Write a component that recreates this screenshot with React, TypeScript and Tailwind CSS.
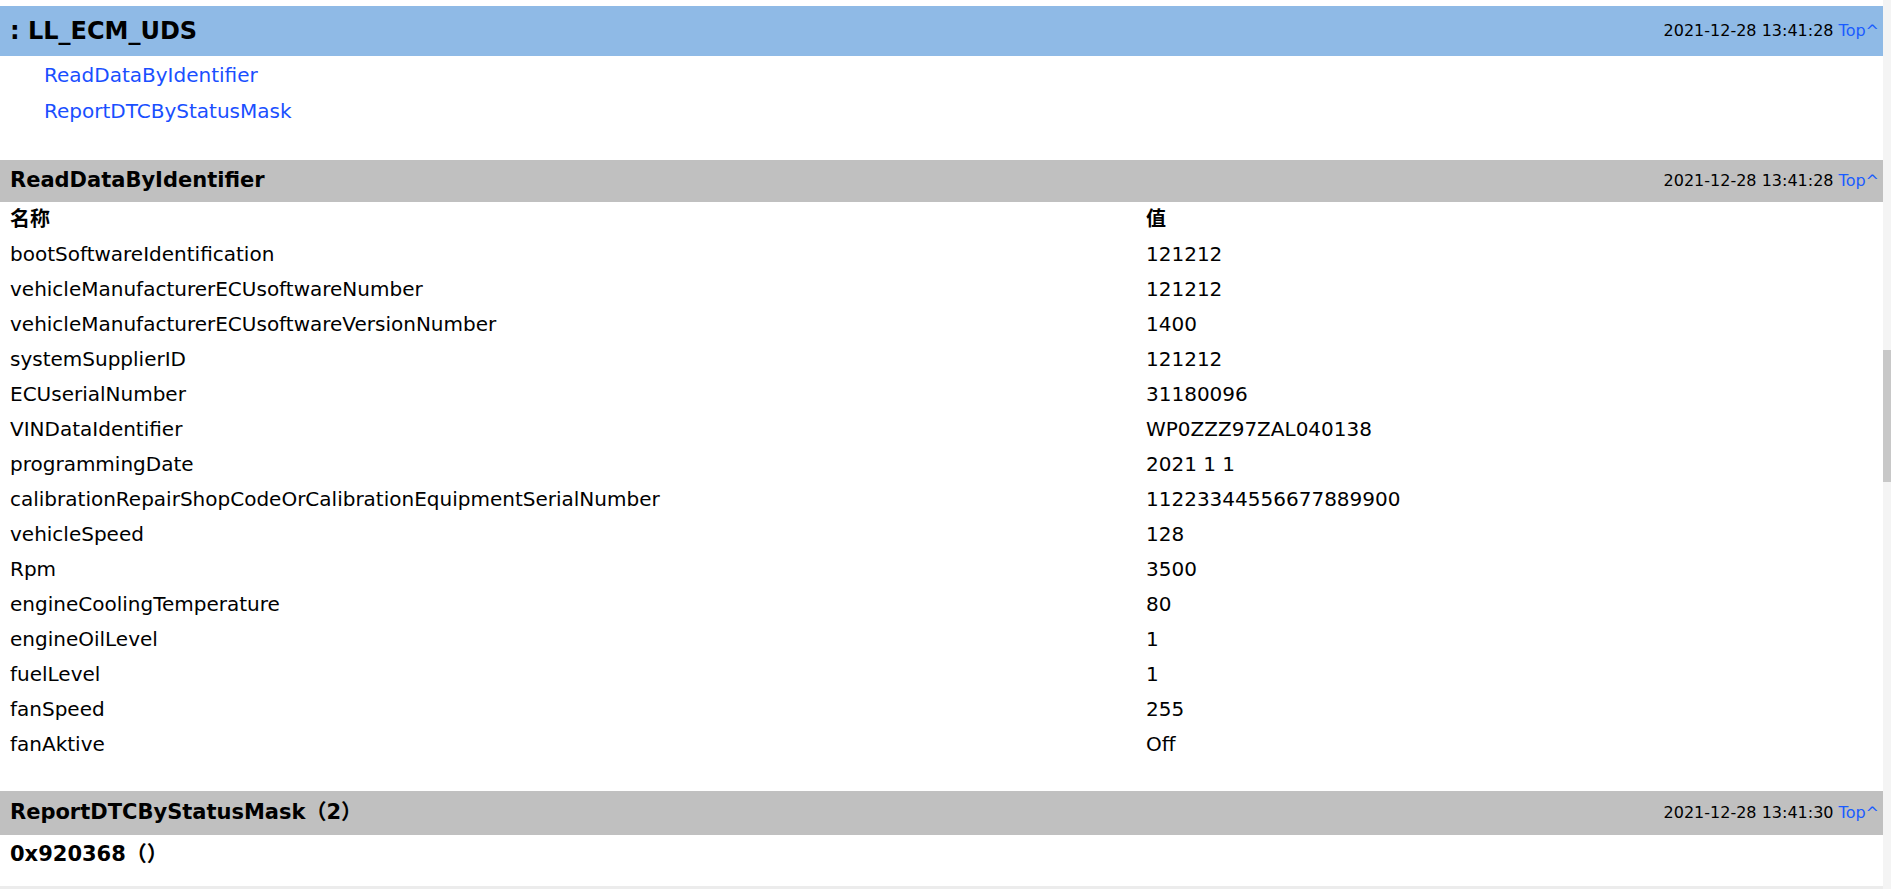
const rows: [string, string][] = [
  ["bootSoftwareIdentification", "121212"],
  ["vehicleManufacturerECUsoftwareNumber", "121212"],
  ["vehicleManufacturerECUsoftwareVersionNumber", "1400"],
  ["systemSupplierID", "121212"],
  ["ECUserialNumber", "31180096"],
  ["VINDataIdentifier", "WP0ZZZ97ZAL040138"],
  ["programmingDate", "2021 1 1"],
  ["calibrationRepairShopCodeOrCalibrationEquipmentSerialNumber", "11223344556677889900"],
  ["vehicleSpeed", "128"],
  ["Rpm", "3500"],
  ["engineCoolingTemperature", "80"],
  ["engineOilLevel", "1"],
  ["fuelLevel", "1"],
  ["fanSpeed", "255"],
  ["fanAktive", "Off"],
];

function Stamp({ t }: { t: string }) {
  return (
    <div className="text-[16px] text-black whitespace-nowrap pr-[4px]">
      {t} <span className="text-[#1a5cff]">Top^</span>
    </div>
  );
}

export default function App() {
  return (
    <div
      className="flex w-[1891px] h-[889px] bg-white overflow-hidden"
      style={{ fontFamily: '"DejaVu Sans", "Noto Sans CJK SC", sans-serif' }}
    >
      <div className="flex-1 flex flex-col pt-[6px]">
        <div className="h-[50px] bg-[#8fbae6] flex items-center justify-between pl-[10px]">
          <div className="text-[24px] font-bold text-black">: LL_ECM_UDS</div>
          <Stamp t="2021-12-28 13:41:28" />
        </div>
        <div className="pl-[44px] pt-[1px] flex flex-col text-[20px] text-[#1a4fff]">
          <div className="h-[36px] leading-[36px]">ReadDataByIdentifier</div>
          <div className="h-[36px] leading-[36px]">ReportDTCByStatusMask</div>
        </div>
        <div className="h-[31px]" />
        <div className="h-[42px] bg-[#c0c0c0] flex items-center justify-between pl-[10px]">
          <div className="text-[21px] font-bold text-black">ReadDataByIdentifier</div>
          <Stamp t="2021-12-28 13:41:28" />
        </div>
        <div className="pl-[10px] text-[20px] text-black">
          <div className="flex h-[34px] items-center font-bold">
            <div className="w-[1136px]">名称</div>
            <div>值</div>
          </div>
          {rows.map(([k, v]) => (
            <div key={k} className="flex h-[35px] items-center">
              <div className="w-[1136px]">{k}</div>
              <div>{v}</div>
            </div>
          ))}
        </div>
        <div className="h-[30px]" />
        <div className="h-[44px] bg-[#c0c0c0] flex items-center justify-between pl-[10px]">
          <div className="text-[21px] font-bold text-black">ReportDTCByStatusMask（2）</div>
          <Stamp t="2021-12-28 13:41:30" />
        </div>
        <div className="pl-[10px] h-[40px] flex items-center text-[21px] font-bold text-black">
          0x920368（）
        </div>
        <div className="flex-1 border-b-[3px] border-[#ececec]" />
      </div>
      <div className="w-[8px] bg-[#f4f4f4] flex flex-col">
        <div className="h-[350px]" />
        <div className="h-[132px] bg-[#c8c8c8]" />
      </div>
    </div>
  );
}
